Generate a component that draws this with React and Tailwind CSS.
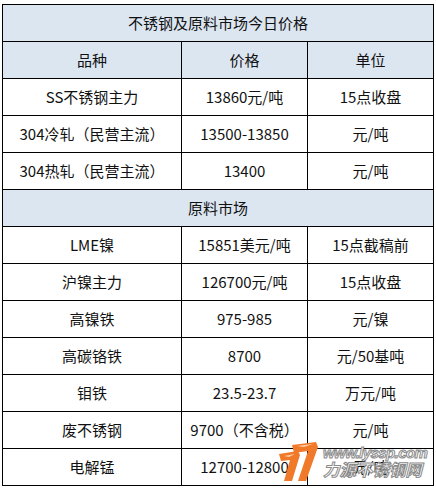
import React from "react";

const rows = [
  { type: "title", text: "不锈钢及原料市场今日价格" },
  { type: "head", cells: ["品种", "价格", "单位"] },
  { cells: ["SS不锈钢主力", "13860元/吨", "15点收盘"] },
  { cells: ["304冷轧（民营主流）", "13500-13850", "元/吨"] },
  { cells: ["304热轧（民营主流）", "13400", "元/吨"] },
  { type: "title", text: "原料市场" },
  { cells: ["LME镍", "15851美元/吨", "15点截稿前"] },
  { cells: ["沪镍主力", "126700元/吨", "15点收盘"] },
  { cells: ["高镍铁", "975-985", "元/镍"] },
  { cells: ["高碳铬铁", "8700", "元/50基吨"] },
  { cells: ["钼铁", "23.5-23.7", "万元/吨"] },
  { cells: ["废不锈钢", "9700（不含税）", "元/吨"] },
  { cells: ["电解锰", "12700-12800", "元/吨"] },
];

function Watermark() {
  return (
    <div className="absolute left-[276px] top-[441px] flex items-center gap-[3px] pointer-events-none">
      <svg width="44" height="42" viewBox="0 0 44 42">
        <path d="M3 13 L22 10 L24 14 L16 40 L8 40 L14 19 L5 20 Z" fill="#f07a2a" />
        <path d="M16 4 L40 1 L42 6 L30 40 L22 40 L32 10 L18 12 Z" fill="#f07a2a" />
        <path d="M8 15 L19 13 L13 16 Z" fill="#ffd0a8" />
        <path d="M21 5 L37 3 L28 6 Z" fill="#ffd0a8" />
      </svg>
      <div className="flex flex-col italic font-bold leading-none text-white [-webkit-text-stroke:1px_#8a8a8a] font-['Liberation_Sans','Noto_Sans_CJK_SC',sans-serif]">
        <span className="text-[15px] tracking-[-0.6px]">www.lyssp.com</span>
        <span className="text-[16.5px] mt-[2px]">力源不锈钢网</span>
      </div>
    </div>
  );
}

export default function App() {
  return (
    <div className="relative w-[436px] h-[490px] overflow-hidden bg-white pt-[4px] pl-[2px] font-['Noto_Sans_CJK_SC',sans-serif] text-[15px] text-[#111]">
      <table className="border-collapse w-[431px] table-fixed">
        <colgroup>
          <col className="w-[179px]" />
          <col className="w-[126px]" />
          <col className="w-[126px]" />
        </colgroup>
        <tbody>
          {rows.map((r, i) =>
            r.type === "title" ? (
              <tr key={i} className="h-[37px]">
                <td colSpan={3} className="border border-black bg-[#dce6f1] text-center p-0">
                  {r.text}
                </td>
              </tr>
            ) : (
              <tr key={i} className="h-[37px]">
                {r.cells.map((c, j) => (
                  <td
                    key={j}
                    className={`border border-black text-center p-0 whitespace-nowrap ${
                      r.type === "head" ? "bg-[#dce6f1]" : "bg-white"
                    }`}
                  >
                    {c}
                  </td>
                ))}
              </tr>
            )
          )}
        </tbody>
      </table>
      <Watermark />
    </div>
  );
}
